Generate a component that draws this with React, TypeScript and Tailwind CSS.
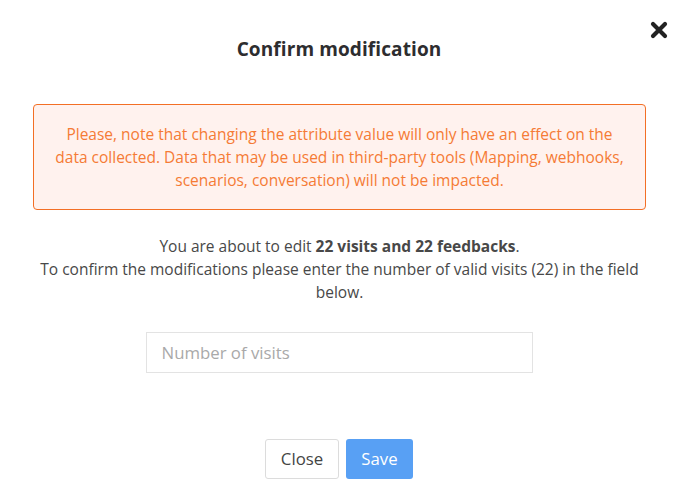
import React from "react";

export default function App() {
  return (
    <div className="relative w-[684px] h-[496px] bg-white" style={{ fontFamily: '"Open Sans", sans-serif' }}>
      <button className="absolute left-[650px] top-[21px] w-[18px] h-[18px] flex items-center justify-center">
        <svg width="18" height="18" viewBox="0 0 18 18">
          <path d="M3 3 L15 15 M15 3 L3 15" stroke="#222" strokeWidth="4.2" strokeLinecap="round" />
        </svg>
      </button>
      <div className="w-[678px] flex flex-col items-center">
        <h1 className="mt-[36px] text-[19px] leading-[26px] font-bold text-[#2d2d2f] tracking-[0.1px]">Confirm modification</h1>
        <div className="mt-[42px] ml-[33px] self-start w-[613px] h-[106px] border border-[#f36f25] rounded-[4px] bg-[#fff2ee] flex items-center justify-center px-[20px]">
          <p className="text-center text-[15.5px] leading-[23px] text-[#f57b35]">
            Please, note that changing the attribute value will only have an effect on the data collected. Data that may be used in third-party tools (Mapping, webhooks, scenarios, conversation) will not be impacted.
          </p>
        </div>
        <p className="mt-[25px] ml-[33px] self-start w-[613px] text-center text-[15.5px] leading-[23px] text-[#484848]">
          You are about to edit <b className="font-bold">22 visits and 22 feedbacks</b>.<br />
          To confirm the modifications please enter the number of valid visits (22) in the field below.
        </p>
        <input
          className="mt-[28px] w-[387px] h-[41px] border border-[#e3e3e3] px-[15px] text-[16.8px] text-[#333] placeholder:text-[#a9a9a9] outline-none"
          placeholder="Number of visits"
        />
        <div className="mt-[66px] flex gap-[7px]">
          <button className="w-[74px] h-[40px] border border-[#dcdcdc] rounded-[3px] bg-white text-[16.8px] text-[#444]">Close</button>
          <button className="w-[67px] h-[40px] rounded-[3px] bg-[#58a0f4] text-[16.8px] text-white">Save</button>
        </div>
      </div>
    </div>
  );
}
